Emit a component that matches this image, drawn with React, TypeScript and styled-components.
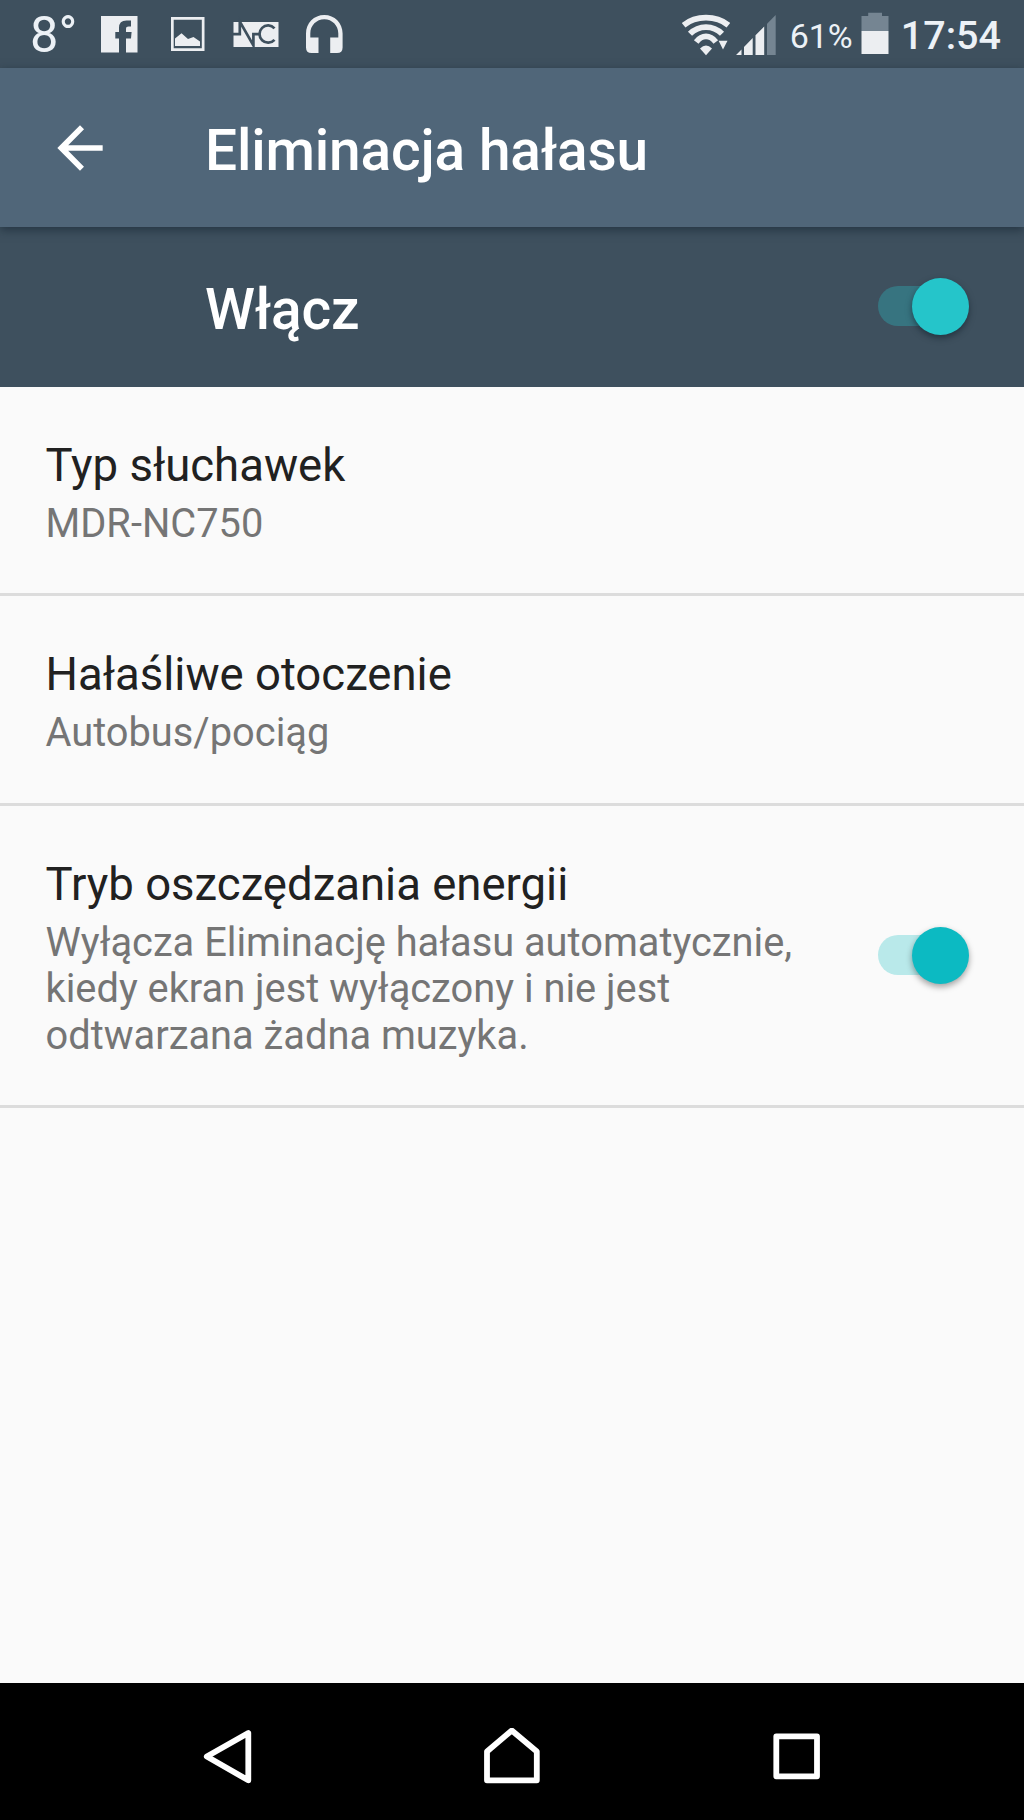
import React, { useState } from "react";
import styled, { createGlobalStyle } from "styled-components";

const GlobalStyle = createGlobalStyle`
  * { box-sizing: border-box; }
  body { margin: 0; background: #fafafa; }
`;

const Screen = styled.div`
  display: flex;
  flex-direction: column;
  width: 1024px;
  height: 1820px;
  background: #fafafa;
  font-family: Roboto, "Liberation Sans", sans-serif;
  overflow: hidden;
`;

const StatusBar = styled.header`
  display: flex;
  justify-content: space-between;
  flex: none;
  height: 68px;
  padding: 0 23px 0 30px;
  background: #3e505e;
  color: #ecf1f6;
`;

const StatusGroup = styled.div`
  display: flex;
  align-items: flex-start;
`;

const StatusText = styled.span<{ $size: number; $top: number; $weight?: number; $left?: number }>`
  font-size: ${(p) => p.$size}px;
  font-weight: ${(p) => p.$weight ?? 400};
  line-height: 48px;
  margin: ${(p) => p.$top}px 0 0 ${(p) => p.$left ?? 0}px;
  white-space: nowrap;
`;

const StatusIcon = styled.svg<{ $left?: number }>`
  display: block;
  flex: none;
  width: 50px;
  height: 68px;
  margin-left: ${(p) => p.$left ?? 0}px;
  fill: #eceef1;
`;

const AppBar = styled.div`
  display: flex;
  align-items: center;
  flex: none;
  height: 159px;
  padding-left: 46px;
  background: #506679;
  color: #fff;
  box-shadow: 0 3px 9px rgba(20, 35, 48, 0.6);
  z-index: 1;
`;

const BackButton = styled.button`
  display: flex;
  padding: 0;
  border: 0;
  background: none;
  color: inherit;
`;

const MasterBar = styled.div`
  display: flex;
  align-items: center;
  justify-content: space-between;
  flex: none;
  height: 160px;
  padding: 0 55px 0 205px;
  background: #3e505e;
  color: #fff;
`;

const Heading = styled.h1<{ $left?: number }>`
  margin: 0 0 0 ${(p) => p.$left ?? 0}px;
  padding-top: 5px;
  font-size: 56.8px;
  font-weight: 500;
  line-height: 67px;
  letter-spacing: -0.18px;
  white-space: nowrap;
`;

const List = styled.main`
  display: flex;
  flex-direction: column;
  flex: 1;
`;

const Row = styled.section<{ $height: number }>`
  display: flex;
  align-items: center;
  justify-content: space-between;
  height: ${(p) => p.$height}px;
  padding: 0 55px 0 45.5px;
  border-bottom: 3px solid #dcdcdc;
`;

const RowText = styled.div`
  padding-top: 6px;
`;

const RowTitle = styled.h2`
  margin: 0;
  font-size: 45.5px;
  font-weight: 400;
  line-height: 54px;
  color: #212121;
  white-space: nowrap;
`;

const RowSummary = styled.p`
  margin: 8px 0 0;
  font-size: 39.8px;
  line-height: 46.5px;
  color: #757575;
  white-space: pre-line;
`;

const SwitchTrack = styled.button<{ $on: boolean; $dark?: boolean }>`
  display: flex;
  align-items: center;
  justify-content: ${(p) => (p.$on ? "flex-end" : "flex-start")};
  flex: none;
  width: 91px;
  height: 57px;
  margin-bottom: ${(p) => (p.$dark ? 2 : 0)}px;
  padding: 0;
  border: 0;
  background: none;
  isolation: isolate;
  position: relative;

  &::before {
    content: "";
    position: absolute;
    inset: 8px 6px 9px 0;
    border-radius: 20px;
    background: ${(p) => (p.$dark ? "#377480" : "#b9e9ea")};
  }
`;

const SwitchThumb = styled.span<{ $dark?: boolean }>`
  width: 57px;
  height: 57px;
  border-radius: 50%;
  background: ${(p) => (p.$dark ? "#25c5ca" : "#0cbac2")};
  box-shadow: 0 3px 6px ${(p) => (p.$dark ? "rgba(15, 30, 40, 0.55)" : "rgba(0, 0, 0, 0.36)")};
  z-index: 1;
`;

const NavBar = styled.nav`
  display: flex;
  justify-content: space-between;
  align-items: center;
  flex: none;
  height: 137px;
  padding: 16px 195px 0 196px;
  background: #000;
`;

const NavIcon = styled.svg`
  display: block;
  width: 64px;
  height: 64px;
  fill: none;
  stroke: #fff;
  stroke-width: 5.8;
  stroke-linejoin: round;
`;

function Switch({ dark }: { dark?: boolean }) {
  const [on, setOn] = useState(true);
  return (
    <SwitchTrack $on={on} $dark={dark} role="switch" aria-checked={on} onClick={() => setOn(!on)}>
      <SwitchThumb $dark={dark} />
    </SwitchTrack>
  );
}

const FacebookIcon = () => (
  <StatusIcon viewBox="95 0 50 68" $left={18}>
    <path d="M101 16H137.5V52.5H126V38.5H131L131.6 32H126V29Q126 26.6 128.6 26.6H131V20.6H126.5Q119 20.6 119 28V32H115.3V38.5H119V52.5H101Z" />
  </StatusIcon>
);

const PictureIcon = () => (
  <StatusIcon viewBox="163 0 50 68" $left={18}>
    <path
      fillRule="evenodd"
      d="M171 17H204.5V51H171ZM173.7 19.7V48.3H201.8V19.7Z"
    />
    <path d="M175 46V38.5L181.5 33.3L188 39L193.5 37L200 41.5V46Z" />
  </StatusIcon>
);

const NoiseCancelIcon = () => (
  <StatusIcon viewBox="230 0 50 68" $left={17}>
    <path d="M233.5 22H278.5V47H233.5Z" />
    <g fill="none" stroke="#3e505e" strokeWidth="2.7">
      <path d="M232 34.2H239.8V21.5L253.4 45.5V34.2H259" />
      <path d="M274.5 28.3A8.6 8.6 0 1 0 274.5 39.8" />
    </g>
  </StatusIcon>
);

const HeadphonesIcon = () => (
  <StatusIcon viewBox="300 0 50 68" $left={20}>
    <path d="M324.3 15C314 15 306 23 306 33.5V47.5Q306 53 311.5 53H318.5V37.5H310.3V33.5C310.3 25.5 316.5 19.3 324.3 19.3S338.3 25.5 338.3 33.5V37.5H330.2V53H337Q342.6 53 342.6 47.5V33.5C342.6 23 334.6 15 324.3 15Z" />
  </StatusIcon>
);

const WifiIcon = () => (
  <StatusIcon viewBox="680 0 50 68">
    <g fill="none" stroke="#eceef1" strokeWidth="5.8">
      <path d="M683.6 25.2C696 15.2 716 15.2 728.4 25.2" />
      <path d="M690 33.8C699 24.8 713 24.8 722 33.8" />
      <path d="M696.2 42C702 34.6 710 34.6 715.8 42" />
    </g>
    <path d="M700 48.6Q706 42.6 712 48.6L706 55.3Z" />
    <path d="M718.6 40.7H727.5L723 49.5Z" />
  </StatusIcon>
);

const SignalIcon = () => (
  <StatusIcon viewBox="730 0 50 68">
    <path d="M736 55L741.5 49.5V55ZM744 47L752.7 38V55H744ZM755.5 35.2L764.2 26.5V55H755.5Z" />
    <path d="M767 23.7L775.7 15V55H767Z" fill="#758592" />
  </StatusIcon>
);

const BatteryIcon = () => (
  <StatusIcon viewBox="852.5 0 50 68">
    <path d="M861 31V16H867.7V12.7H881.5V16H888V31Z" fill="#758592" />
    <path d="M861 31H888V54H861Z" />
  </StatusIcon>
);

export default function App() {
  return (
    <>
      <GlobalStyle />
      <Screen>
        <StatusBar>
          <StatusGroup>
            <StatusText $size={50.5} $top={11}>8°</StatusText>
            <FacebookIcon />
            <PictureIcon />
            <NoiseCancelIcon />
            <HeadphonesIcon />
          </StatusGroup>
          <StatusGroup>
            <WifiIcon />
            <SignalIcon />
            <StatusText $size={34} $top={12} $left={10}>61%</StatusText>
            <BatteryIcon />
            <StatusText $size={39.5} $top={12} $weight={500} $left={-2}>17:54</StatusText>
          </StatusGroup>
        </StatusBar>

        <AppBar>
          <BackButton aria-label="Wstecz">
            <svg width="68" height="68" viewBox="0 0 24 24" fill="#fff">
              <path d="M20 11H7.83l5.59-5.59L12 4l-8 8 8 8 1.41-1.41L7.83 13H20v-2z" />
            </svg>
          </BackButton>
          <Heading $left={91}>Eliminacja hałasu</Heading>
        </AppBar>

        <MasterBar>
          <Heading>Włącz</Heading>
          <Switch dark />
        </MasterBar>

        <List>
          <Row $height={209}>
            <RowText>
              <RowTitle>Typ słuchawek</RowTitle>
              <RowSummary>MDR-NC750</RowSummary>
            </RowText>
          </Row>
          <Row $height={210}>
            <RowText>
              <RowTitle>Hałaśliwe otoczenie</RowTitle>
              <RowSummary>Autobus/pociąg</RowSummary>
            </RowText>
          </Row>
          <Row $height={302}>
            <RowText>
              <RowTitle>Tryb oszczędzania energii</RowTitle>
              <RowSummary>
                {"Wyłącza Eliminację hałasu automatycznie,\nkiedy ekran jest wyłączony i nie jest\nodtwarzana żadna muzyka."}
              </RowSummary>
            </RowText>
            <Switch />
          </Row>
        </List>

        <NavBar>
          <NavIcon viewBox="196 1728 64 64">
            <path d="M206.8 1756.5L248.3 1733V1780.3Z" />
          </NavIcon>
          <NavIcon viewBox="481 1728 64 64">
            <path d="M487 1780.3V1751.5L511.8 1730.5L536.8 1751.5V1780.3Z" />
          </NavIcon>
          <NavIcon viewBox="765 1728 64 64">
            <path d="M776.3 1736.3H817V1776.3H776.3Z" />
          </NavIcon>
        </NavBar>
      </Screen>
    </>
  );
}
